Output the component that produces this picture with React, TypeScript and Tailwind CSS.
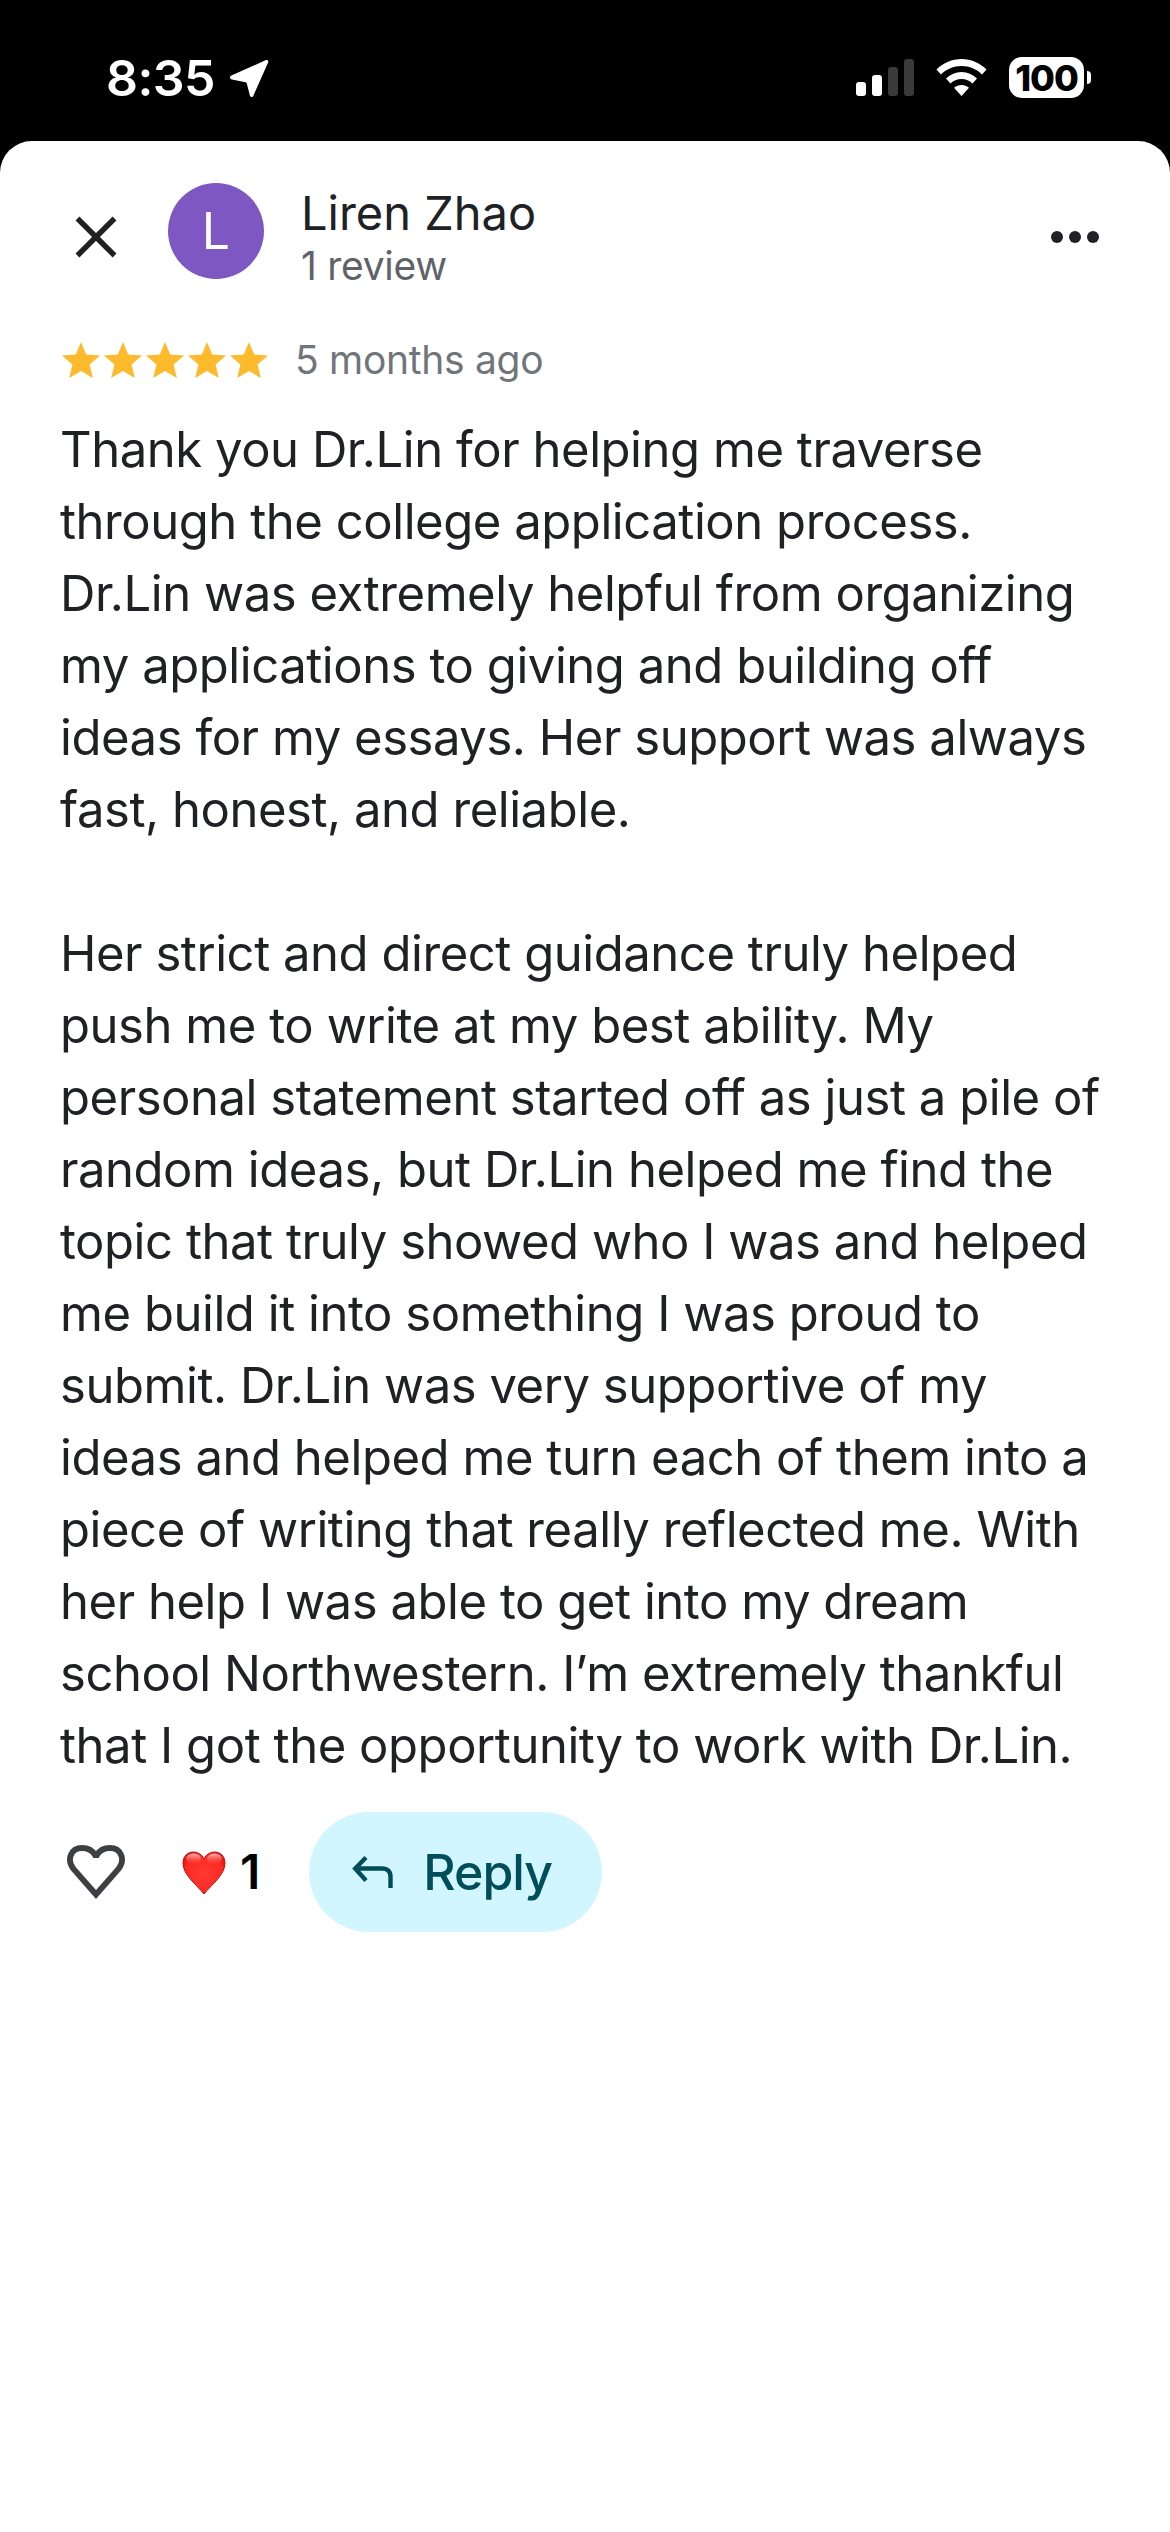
import React from "react";

const lines1 = [
  "Thank you Dr.Lin for helping me traverse",
  "through the college application process.",
  "Dr.Lin was extremely helpful from organizing",
  "my applications to giving and building off",
  "ideas for my essays. Her support was always",
  "fast, honest, and reliable.",
];
const lines2 = [
  "Her strict and direct guidance truly helped",
  "push me to write at my best ability. My",
  "personal statement started off as just a pile of",
  "random ideas, but Dr.Lin helped me find the",
  "topic that truly showed who I was and helped",
  "me build it into something I was proud to",
  "submit. Dr.Lin was very supportive of my",
  "ideas and helped me turn each of them into a",
  "piece of writing that really reflected me. With",
  "her help I was able to get into my dream",
  "school Northwestern. I’m extremely thankful",
  "that I got the opportunity to work with Dr.Lin.",
];

function Star() {
  return (
    <svg viewBox="0 0 42 38" className="w-[42px] h-[38px] shrink-0">
      <path d="M21 1 L26.2 13.4 L40 14.6 L29.6 23.6 L32.8 37 L21 29.9 L9.2 37 L12.4 23.6 L2 14.6 L15.8 13.4 Z" fill="#fdba2c" />
    </svg>
  );
}

function StatusBar() {
  return (
    <div className="h-[141px] bg-black flex items-start pt-[57px] pl-[106px] pr-[79px] text-white">
      <span className="text-[50px] leading-[42px] font-semibold font-['Inter',sans-serif] tracking-[-0.6px]">8:35</span>
      <svg viewBox="0 0 40 40" className="w-[40px] h-[40px] ml-[14px] mt-[2px]">
        <path d="M36.5 1.2 C38.5 .3 39.9 1.8 39 3.8 L24.5 36.5 C23.5 38.8 21.3 38.5 20.8 36.3 L17.8 24.6 C17.6 23.8 17.2 23.4 16.4 23.2 L3 20.5 C.6 20 .4 17.6 2.4 16.6 Z" fill="#fff" />
      </svg>
      <div className="ml-auto flex items-start">
        <div className="flex items-end gap-[6px] h-[37px] mt-[2px]">
          <div className="w-[10px] h-[14px] rounded-[3px] bg-white" />
          <div className="w-[10px] h-[21px] rounded-[3px] bg-white" />
          <div className="w-[10px] h-[29px] rounded-[3px] bg-[#3a3a3a]" />
          <div className="w-[10px] h-[37px] rounded-[3px] bg-[#3a3a3a]" />
        </div>
        <svg viewBox="0 0 51 37" className="w-[51px] h-[37px] ml-[22px] mt-[2px]">
          <path d="M25.5 0 C35 0 43.5 3.8 50.5 10.5 L46 15.5 C40.5 10 33.5 7 25.5 7 C17.5 7 10.5 10 5 15.5 L.5 10.5 C7.5 3.8 16 0 25.5 0 Z" fill="#fff" />
          <path d="M25.5 13 C31.5 13 36.5 15.2 41 19.5 L36.5 24.5 C33.5 21.7 30 20 25.5 20 C21 20 17.5 21.7 14.5 24.5 L10 19.5 C14.5 15.2 19.5 13 25.5 13 Z" fill="#fff" />
          <path d="M25.5 26 C28.5 26 30.5 26.8 33 28.8 L25.5 37 L18 28.8 C20.5 26.8 22.5 26 25.5 26 Z" fill="#fff" />
        </svg>
        <div className="ml-[22px] flex items-center">
          <div className="w-[75px] h-[41px] rounded-[13px] bg-white flex items-center justify-center text-black text-[36px] leading-none font-extrabold font-['Inter',sans-serif] tracking-[-1px]">100</div>
          <div className="w-[4px] h-[13px] ml-[3px] rounded-r-full bg-white" />
        </div>
      </div>
    </div>
  );
}

export default function App() {
  return (
    <div className="w-[1170px] h-[2532px] bg-black font-['Inter',sans-serif] overflow-hidden">
      <StatusBar />
      <div className="h-[2391px] bg-white rounded-t-[32px]">
        <div className="flex items-start pt-[42px] pl-[75px] pr-[71px]">
          <svg viewBox="0 0 42 42" className="w-[42px] h-[42px] mt-[33px] shrink-0">
            <path d="M2.5 2.5 L39.5 39.5 M39.5 2.5 L2.5 39.5" stroke="#202124" strokeWidth="5.5" fill="none" />
          </svg>
          <div className="w-[96px] h-[96px] rounded-full bg-[#7e57c2] ml-[51px] flex items-center justify-center text-white text-[50px] leading-none shrink-0">L</div>
          <div className="ml-[37px]">
            <div className="text-[47px] leading-[54px] mt-[3px] text-[#202124]">Liren Zhao</div>
            <div className="text-[39px] leading-[46px] mt-[3px] text-[#5f6368] tracking-[-0.3px]">1 review</div>
          </div>
          <div className="ml-auto flex gap-[6px] mt-[48px]">
            <div className="w-[12px] h-[12px] rounded-full bg-[#202124]" />
            <div className="w-[12px] h-[12px] rounded-full bg-[#202124]" />
            <div className="w-[12px] h-[12px] rounded-full bg-[#202124]" />
          </div>
        </div>
        <div className="flex items-center pl-[60px] mt-[48px] h-[46px]">
          <div className="flex gap-0">
            <Star /><Star /><Star /><Star /><Star />
          </div>
          <span className="ml-[25px] text-[39px] leading-[46px] text-[#70757a] tracking-[-0.3px]">5 months ago</span>
        </div>
        <div className="pl-[60px] mt-[31px] text-[49px] leading-[72px] text-[#202124] whitespace-nowrap tracking-[-0.45px]">
          {lines1.map((l) => (
            <div key={l}>{l}</div>
          ))}
          <div className="h-[72px]" />
          {lines2.map((l) => (
            <div key={l}>{l}</div>
          ))}
        </div>
        <div className="flex items-center mt-[30px] pl-[66px] h-[120px]">
          <svg viewBox="0 0 60 54" className="w-[60px] h-[54px] shrink-0">
            <path d="M30 49.5 L7.5 24 C.5 15 4.5 3 16 3 C22 3 26.5 5.5 29 10 L31 10 C33.5 5.5 38 3 44 3 C55.5 3 59.5 15 52.5 24 Z" fill="none" stroke="#3c4043" strokeWidth="5.8" />
          </svg>
          <svg viewBox="0 0 44 44" className="w-[44px] h-[44px] ml-[56px] mt-[2px] shrink-0">
            <defs>
              <radialGradient id="h" cx="0.5" cy="0.5" r="0.6">
                <stop offset="0" stopColor="#ff3b30" />
                <stop offset="0.7" stopColor="#fb2a25" />
                <stop offset="1" stopColor="#d9140f" />
              </radialGradient>
              <linearGradient id="g" x1="0" y1="0" x2="0" y2="1">
                <stop offset="0" stopColor="#ffc4c0" stopOpacity="0.95" />
                <stop offset="1" stopColor="#ff4b45" stopOpacity="0" />
              </linearGradient>
            </defs>
            <path d="M22 43 C14 33 1 24 1 12 C1 5 6 1 11 1 C16 1 20 3.5 22 8 C24 3.5 28 1 33 1 C38 1 43 5 43 12 C43 24 30 33 22 43 Z" fill="url(#h)" stroke="#c8100c" strokeWidth="1" />
            <ellipse cx="11.5" cy="8" rx="7.5" ry="5.5" fill="url(#g)" />
            <ellipse cx="32.5" cy="8" rx="7.5" ry="5.5" fill="url(#g)" />
          </svg>
          <span className="ml-[14px] text-[48px] leading-none font-semibold text-black">1</span>
          <div className="ml-[49px] w-[293px] h-[120px] rounded-full bg-[#d2f6ff] flex items-center pl-[43px]">
            <svg viewBox="0 0 41 32" className="w-[41px] h-[32px] shrink-0">
              <path d="M14 1.5 L3.2 12.5 L14 24.5 M3.2 12.5 L30 12.5 C35.5 12.5 38.5 15.5 38.5 20.5 L38.5 32" fill="none" stroke="#004e5a" strokeWidth="4.4" />
            </svg>
            <span className="ml-[30px] text-[50px] leading-none font-medium text-[#004e5a] tracking-[-1px]">Reply</span>
          </div>
        </div>
      </div>
    </div>
  );
}
